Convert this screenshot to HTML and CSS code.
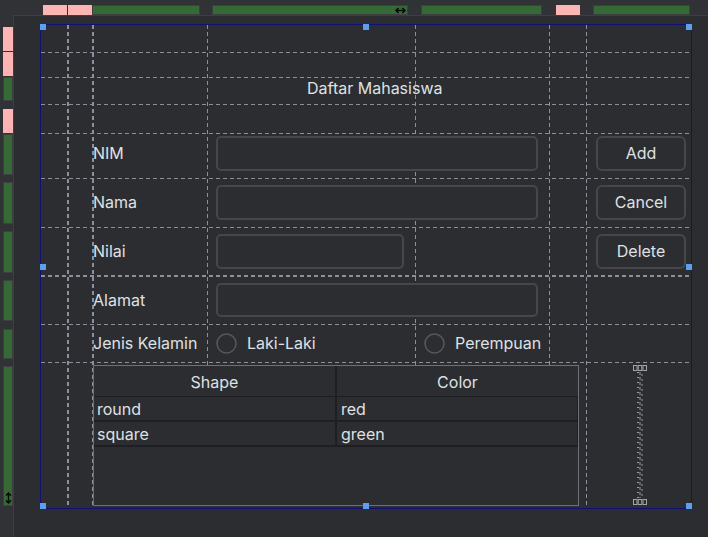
FILE: index.html
```html
<!DOCTYPE html>
<html>
<head>
<meta charset="utf-8">
<title>Daftar Mahasiswa</title>
<link rel="stylesheet" href="styles.css">
</head>
<body>
<div class="app">
  <div class="corner"></div>
  <div class="topbar">
    <span class="tb pink tb1"></span>
    <span class="tb pink tb2"></span>
    <span class="tb green tb3"></span>
    <span class="tb green tb4">
      <svg class="harrow" width="11" height="7" viewBox="0 0 11 7"><path d="M1 3.5H10M3.5 1L1 3.5L3.5 6M7.5 1L10 3.5L7.5 6" stroke="#000" stroke-width="1.4" fill="none"/></svg>
    </span>
    <span class="tb green tb5"></span>
    <span class="tb pink tb6"></span>
    <span class="tb green tb7"></span>
  </div>
  <div class="leftbar">
    <span class="lb pink lb1"></span>
    <span class="lb pink lb2"></span>
    <span class="lb green lb3"></span>
    <span class="lb pink lb4"></span>
    <span class="lb green lb5"></span>
    <span class="lb green lb6"></span>
    <span class="lb green lb7"></span>
    <span class="lb green lb8"></span>
    <span class="lb green lb9"></span>
    <span class="lb green lb10">
      <svg class="varrow" width="7" height="12" viewBox="0 0 7 12"><path d="M3.5 1V11M1 3.5L3.5 1L6 3.5M1 8.5L3.5 11L6 8.5" stroke="#000" stroke-width="1.4" fill="none"/></svg>
    </span>
  </div>
  <div class="panel">
    <div class="form">
      <svg class="gridlines" width="650" height="483" viewBox="0 0 650 483">
        <g stroke="#8a919d" stroke-dasharray="4 3" fill="none">
          <line x1="27" y1="0" x2="27" y2="483" stroke-width="2"/>
          <line x1="52" y1="0" x2="52" y2="483" stroke-width="2"/>
          <line x1="166.5" y1="0" x2="166.5" y2="483"/>
          <line x1="374.5" y1="0" x2="374.5" y2="483"/>
          <line x1="508.5" y1="0" x2="508.5" y2="483"/>
          <line x1="545.5" y1="0" x2="545.5" y2="483"/>
          <line x1="0" y1="27.5" x2="650" y2="27.5"/>
          <line x1="0" y1="52.5" x2="650" y2="52.5"/>
          <line x1="0" y1="79.5" x2="650" y2="79.5"/>
          <line x1="0" y1="108.5" x2="650" y2="108.5"/>
          <line x1="0" y1="153.5" x2="650" y2="153.5"/>
          <line x1="0" y1="202.5" x2="650" y2="202.5"/>
          <line x1="0" y1="251" x2="650" y2="251" stroke-width="2"/>
          <line x1="0" y1="299.5" x2="650" y2="299.5"/>
          <line x1="0" y1="337.5" x2="650" y2="337.5"/>
        </g>
      </svg>

      <div class="title">Daftar Mahasiswa</div>

      <div class="lbl r-nim">NIM</div>
      <div class="field wide r-nim"></div>
      <div class="btn r-nim">Add</div>

      <div class="lbl r-nama">Nama</div>
      <div class="field wide r-nama"></div>
      <div class="btn r-nama">Cancel</div>

      <div class="lbl r-nilai">Nilai</div>
      <div class="field narrow r-nilai"></div>
      <div class="btn r-nilai">Delete</div>

      <div class="lbl r-alamat">Alamat</div>
      <div class="field wide r-alamat"></div>

      <div class="lbl-jk">Jenis Kelamin</div>
      <div class="radio radio-l">
        <svg class="circle" width="21" height="21" viewBox="0 0 21 21"><circle cx="10.5" cy="10.5" r="9.5" fill="none" stroke="#55585d" stroke-width="1.5"/></svg>
        <span>Laki-Laki</span>
      </div>
      <div class="radio radio-p">
        <svg class="circle" width="21" height="21" viewBox="0 0 21 21"><circle cx="10.5" cy="10.5" r="9.5" fill="none" stroke="#55585d" stroke-width="1.5"/></svg>
        <span>Perempuan</span>
      </div>

      <div class="table">
        <div class="thead">
          <div class="th th1">Shape</div>
          <div class="th th2">Color</div>
        </div>
        <div class="tr">
          <div class="td td1">round</div>
          <div class="td td2">red</div>
        </div>
        <div class="tr">
          <div class="td td1">square</div>
          <div class="td td2">green</div>
        </div>
      </div>

      <svg class="spacer" width="14" height="140" viewBox="0 0 14 140">
        <defs>
          <pattern id="ticks" x="0" y="7" width="14" height="5" patternUnits="userSpaceOnUse">
            <rect x="4" y="0" width="2" height="1" fill="#9a9a9a"/>
            <rect x="8" y="2.5" width="2" height="1" fill="#9a9a9a"/>
            <rect x="6.5" y="0" width="1" height="3" fill="#9a9a9a"/>
          </pattern>
        </defs>
        <g fill="none" stroke="#a5a5a5" stroke-width="1">
          <rect x="0.5" y="0.5" width="3.5" height="5"/>
          <rect x="5.25" y="0.5" width="3.5" height="5"/>
          <rect x="10" y="0.5" width="3.5" height="5"/>
          <rect x="0.5" y="134.5" width="3.5" height="5"/>
          <rect x="5.25" y="134.5" width="3.5" height="5"/>
          <rect x="10" y="134.5" width="3.5" height="5"/>
        </g>
        <rect x="0" y="7" width="14" height="126" fill="url(#ticks)"/>
      </svg>

      <span class="handle h-tl"></span>
      <span class="handle h-tm"></span>
      <span class="handle h-tr"></span>
      <span class="handle h-ml"></span>
      <span class="handle h-mr"></span>
      <span class="handle h-bl"></span>
      <span class="handle h-bm"></span>
      <span class="handle h-br"></span>
    </div>
  </div>
</div>
</body>
</html>
```

FILE: styles.css
```css
* { box-sizing: border-box; }
html, body { margin: 0; padding: 0; }
body {
  width: 708px;
  height: 537px;
  overflow: hidden;
  background: #313235;
  font-family: Inter, "Noto Sans", sans-serif;
  font-size: 16px;
  color: #dfe1e5;
}
.app {
  display: grid;
  grid-template-columns: 13px 695px;
  grid-template-rows: 15px 522px;
}

/* top ruler */
.topbar {
  display: flex;
  padding: 5px 0 0 30px;
}
.tb { flex: none; height: 10px; display: block; }
.pink { background: #ffb3b4; }
.green { background: #356a37; border: 1px solid #3c3e41; }
.tb1 { width: 24px; }
.tb2 { width: 24px; margin-left: 1px; }
.tb3 { width: 108px; }
.tb4 { width: 196px; margin-left: 12px; display: flex; justify-content: flex-end; align-items: center; padding-right: 1px; }
.tb5 { width: 121px; margin-left: 13px; }
.tb6 { width: 24px; margin-left: 14px; }
.tb7 { width: 97px; margin-left: 13px; }
.harrow { display: block; }

/* left ruler */
.leftbar {
  display: flex;
  flex-direction: column;
  padding: 12px 0 0 3px;
}
.lb { flex: none; width: 10px; display: block; }
.lb1 { height: 24px; }
.lb2 { height: 24px; margin-top: 1px; }
.lb3 { height: 24px; margin-top: 1px; }
.lb4 { height: 24px; margin-top: 8px; }
.lb5 { height: 41px; margin-top: 1px; }
.lb6 { height: 42px; margin-top: 7px; }
.lb7 { height: 42px; margin-top: 7px; }
.lb8 { height: 41px; margin-top: 7px; }
.lb9 { height: 30px; margin-top: 8px; }
.lb10 { height: 140px; margin-top: 7px; display: flex; flex-direction: column; justify-content: flex-end; align-items: center; padding-bottom: 1px; }
.varrow { display: block; }

/* design panel */
.panel {
  background: #2b2d30;
  border-left: 1px solid #3c3e41;
  border-top: 1px solid #3c3e41;
  padding: 8px 0 0 26px;
}
.form {
  position: relative;
  width: 652px;
  height: 485px;
  border: 1px solid #0f1079;
  display: grid;
  grid-template-columns: 26px 26px 114px 208px 134px 37px 105px;
  grid-template-rows: 27px 25px 27px 29px 45px 49px 48px 49px 38px 146px;
}
.gridlines {
  position: absolute;
  left: 0;
  top: 0;
  z-index: 0;
}
.form > div, .form > .spacer { position: relative; z-index: 1; }

.title {
  grid-row: 3;
  grid-column: 4 / 6;
  align-self: start;
  margin-left: 100px;
  line-height: 22px;
  white-space: nowrap;
}

.lbl {
  grid-column: 3;
  align-self: start;
  height: 35px;
  line-height: 35px;
  white-space: nowrap;
}
.field {
  align-self: start;
  height: 35px;
  margin-left: 9px;
  margin-right: 11px;
  border: 2px solid #45474b;
  border-radius: 5px;
  background: #2b2d30;
}
.field.wide { grid-column: 4 / 6; }
.field.narrow { grid-column: 4; }
.btn {
  grid-column: 7;
  align-self: start;
  height: 35px;
  margin-left: 10px;
  margin-right: 5px;
  border: 2px solid #45474b;
  border-radius: 6px;
  background: #2b2d30;
  text-align: center;
  line-height: 31px;
}

.r-nim { grid-row: 5; margin-top: 3px; }
.r-nama { grid-row: 6; margin-top: 7px; }
.r-nilai { grid-row: 7; margin-top: 7px; }
.r-alamat { grid-row: 8; margin-top: 8px; }
.field.r-alamat { height: 34px; }
.lbl.r-alamat { height: 34px; line-height: 34px; }

.lbl-jk {
  grid-row: 9;
  grid-column: 3;
  align-self: center;
  white-space: nowrap;
  line-height: 20px;
}
.radio {
  grid-row: 9;
  align-self: center;
  display: flex;
  align-items: center;
  gap: 10px;
  margin-left: 9px;
  white-space: nowrap;
  line-height: 20px;
}
.radio-l { grid-column: 4; }
.radio-p { grid-column: 5 / 8; }
.circle { display: block; flex: none; }

/* table */
.table {
  grid-row: 10;
  grid-column: 3 / 7;
  align-self: start;
  margin-top: 3px;
  margin-right: 7px;
  height: 141px;
  border: 1px solid #6c7078;
  background: #2b2d30;
}
.thead, .tr {
  display: grid;
  grid-template-columns: 243px 241px;
}
.thead { height: 31px; border-bottom: 1px solid #1e1f22; }
.th { text-align: center; line-height: 30px; padding-top: 1px; }
.th1 { border-right: 2px solid #1e1f22; }
.tr { height: 25px; border-bottom: 2px solid #1e1f22; }
.td { line-height: 23px; padding-left: 3px; padding-top: 1px; }
.td1 { border-right: 2px solid #1e1f22; }
.td2 { border-right: 1px solid #1e1f22; padding-left: 4px; }

.spacer {
  grid-row: 10;
  grid-column: 7;
  align-self: start;
  margin-top: 3px;
  margin-left: 47px;
  display: block;
}

/* selection handles */
.handle {
  position: absolute;
  width: 6px;
  height: 6px;
  background: #5c9ff0;
  z-index: 2;
}
.h-tl { left: -1px; top: -1px; }
.h-tm { left: 322px; top: -1px; }
.h-tr { right: -1px; top: -1px; }
.h-ml { left: -1px; top: 239px; }
.h-mr { right: -1px; top: 239px; }
.h-bl { left: -1px; bottom: -1px; }
.h-bm { left: 322px; bottom: -1px; }
.h-br { right: -1px; bottom: -1px; }
```
